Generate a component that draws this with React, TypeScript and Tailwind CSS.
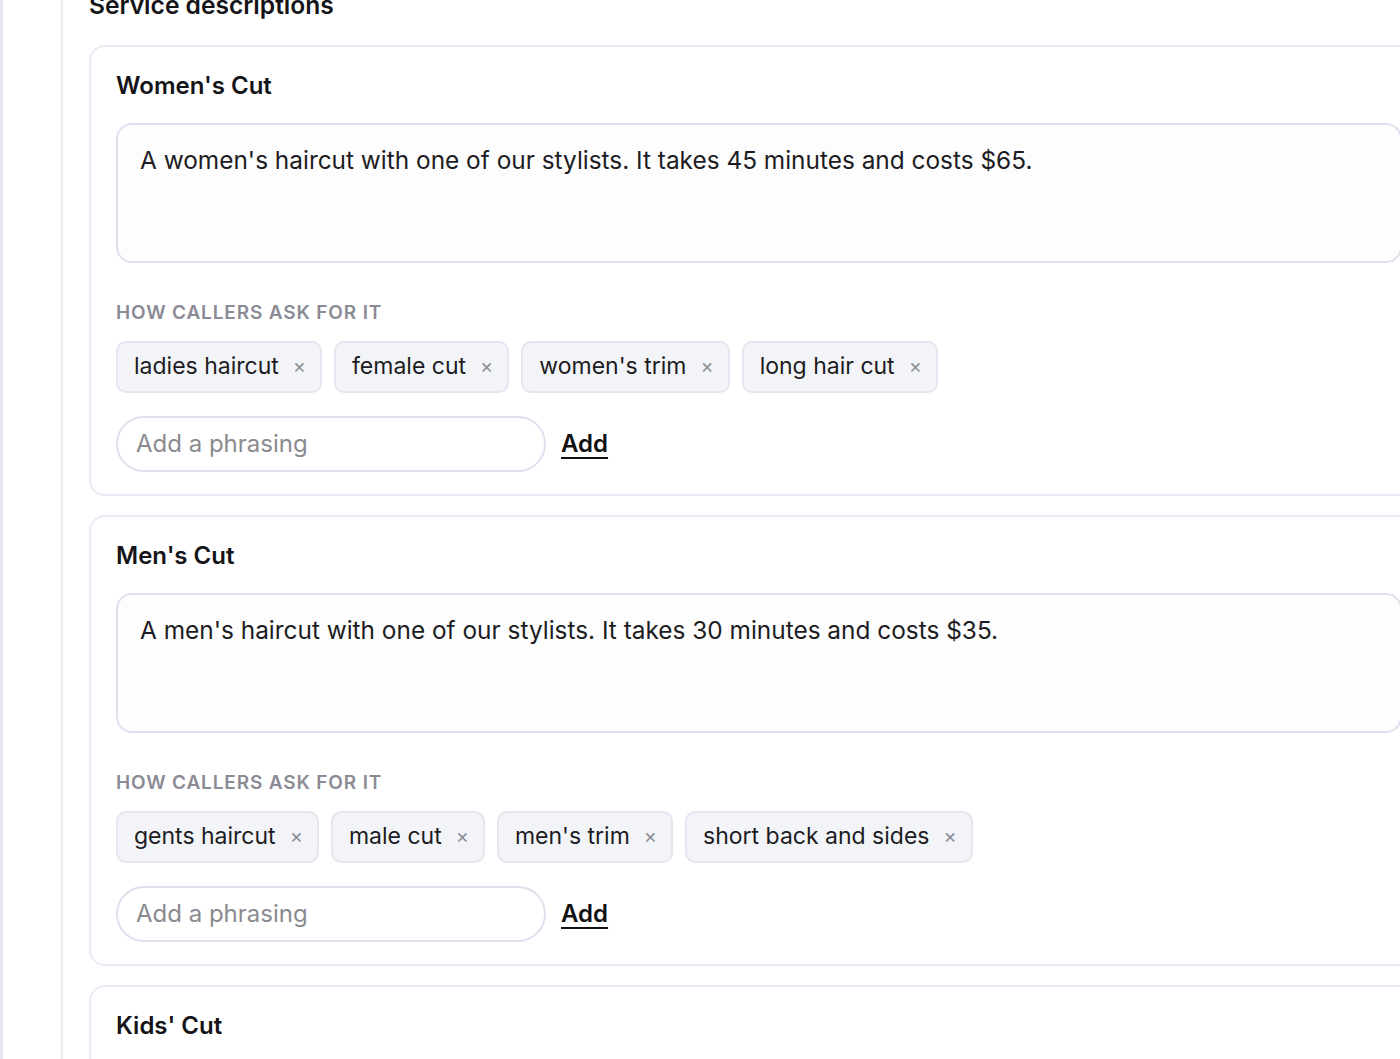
import React from "react";

type Service = { name: string; desc: string; phrases: string[] };

const services: Service[] = [
  {
    name: "Women's Cut",
    desc: "A women's haircut with one of our stylists. It takes 45 minutes and costs $65.",
    phrases: ["ladies haircut", "female cut", "women's trim", "long hair cut"],
  },
  {
    name: "Men's Cut",
    desc: "A men's haircut with one of our stylists. It takes 30 minutes and costs $35.",
    phrases: ["gents haircut", "male cut", "men's trim", "short back and sides"],
  },
  {
    name: "Kids' Cut",
    desc: "A kids' haircut with one of our stylists. It takes 20 minutes and costs $25.",
    phrases: ["children's haircut", "child cut"],
  },
];

function Chip({ label }: { label: string }) {
  return (
    <div className="flex h-[52px] items-center gap-[14px] rounded-[10px] border-2 border-[#e6e5f1] bg-[#f3f4f8] pl-[16px] pr-[14px] pb-[2px] text-[23px] text-[#1c1c22]">
      <span>{label}</span>
      <span className="text-[20px] leading-none text-[#8d8d96]">×</span>
    </div>
  );
}

function Card({ s }: { s: Service }) {
  return (
    <div className="w-[1340px] shrink-0 rounded-[16px] border-2 border-[#ecebf5] bg-white pl-[25px] pr-[25px] pt-[22px] pb-[22px]">
      <h3 className="text-[24px] font-semibold leading-[34px] text-[#141418]">{s.name}</h3>
      <div className="mt-[20px] h-[140px] rounded-[16px] border-2 border-[#e0dfee] bg-[#fdfdfd] px-[22px] pt-[18px] text-[24.4px] leading-[34px] text-[#1c1c22]">
        {s.desc}
      </div>
      <div className="mt-[38px] text-[19px] font-semibold uppercase leading-[24px] tracking-[0.045em] text-[#8b8b96]">
        How callers ask for it
      </div>
      <div className="mt-[16px] flex flex-wrap gap-[12px]">
        {s.phrases.map((p) => (
          <Chip key={p} label={p} />
        ))}
      </div>
      <div className="mt-[23px] flex items-center gap-[15px]">
        <div className="flex h-[56px] w-[430px] items-center rounded-full border-2 border-[#e0dfee] bg-white pl-[18px] text-[24px] text-[#8a8a8f]">
          Add a phrasing
        </div>
        <span className="text-[24px] font-semibold text-[#111] underline underline-offset-[5px] decoration-2">Add</span>
      </div>
    </div>
  );
}

export default function App() {
  return (
    <div
      className="flex h-[1059px] w-[1400px] overflow-hidden bg-white"
      style={{ fontFamily: "Inter, 'Noto Sans', sans-serif" }}
    >
      <div className="w-[3px] shrink-0 bg-[#e7e5f5]" />
      <div className="w-[58px] shrink-0 bg-white" />
      <div className="w-[2px] shrink-0 bg-[#ebebf0]" />
      <div className="flex min-w-0 flex-1 flex-col pl-[26px]">
        <h2 className="-mt-[12px] text-[24.6px] font-semibold leading-[34px] text-[#141418]">Service descriptions</h2>
        <div className="mt-[23px] flex flex-col gap-[19px]">
          {services.map((s) => (
            <Card key={s.name} s={s} />
          ))}
        </div>
      </div>
    </div>
  );
}
